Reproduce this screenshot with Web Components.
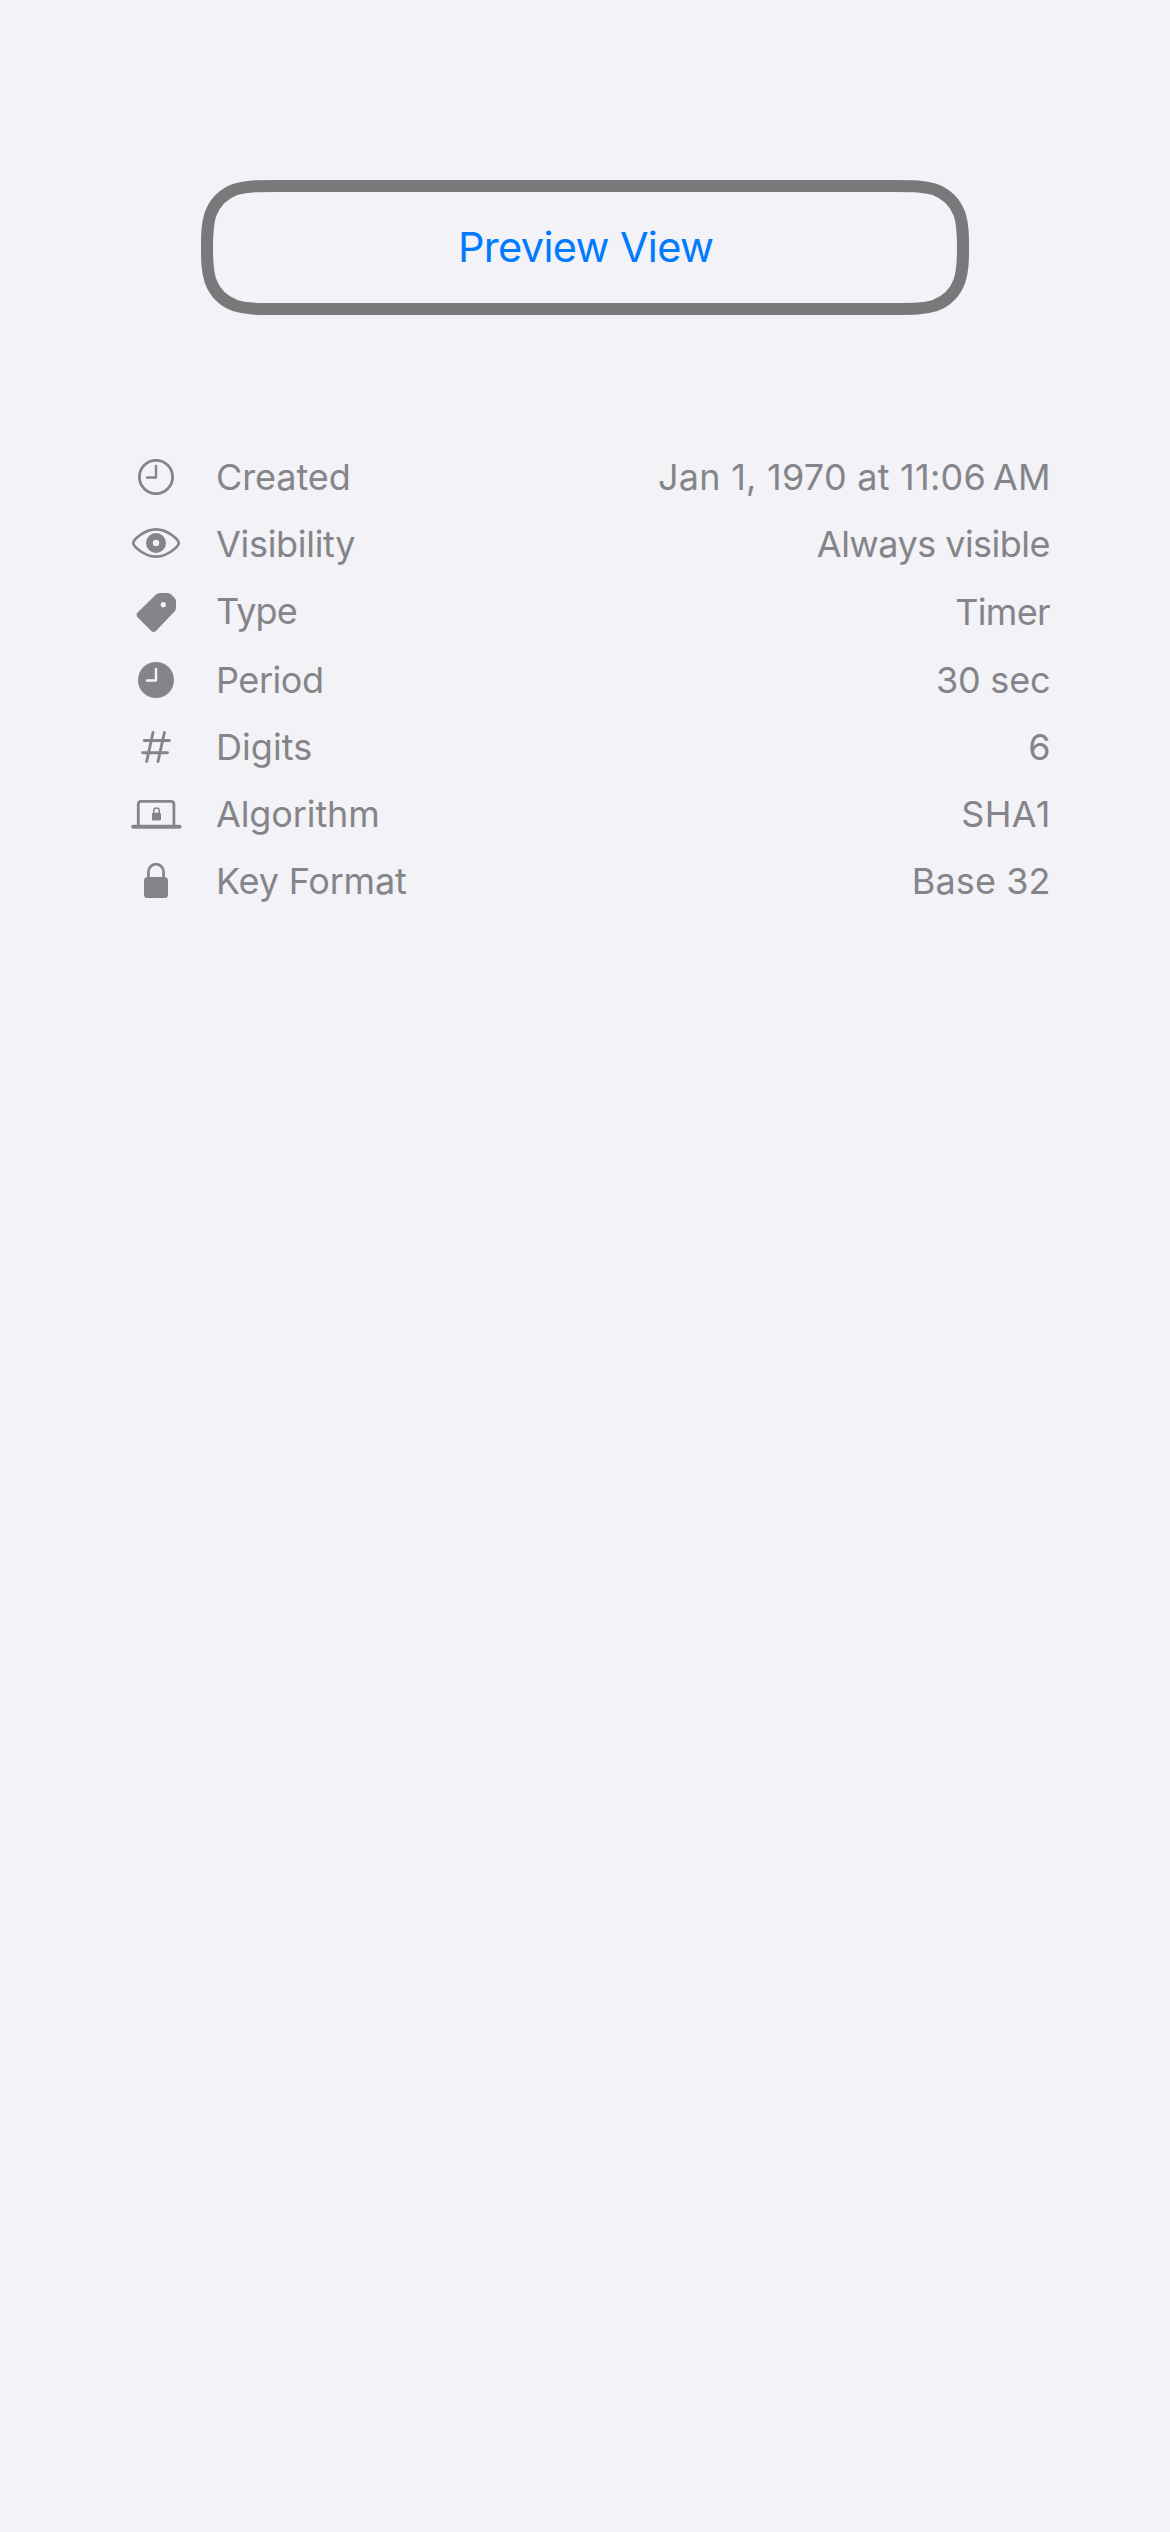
<!DOCTYPE html>
<html lang="en">
<head>
<meta charset="utf-8">
<title>Preview View</title>
<style>
html,body{margin:0;background:#f2f2f7}
body{min-height:2532px;font-family:Inter,"Liberation Sans",sans-serif}
</style>
</head>
<body>
<preview-screen></preview-screen>
<script>
const ICONS = {
  clock: '<circle cx="30" cy="33" r="16.6" stroke-width="2.8"/><path d="M30 22V33.5H21" stroke-width="2.4"/>',
  eye: '<path d="M7.2 32C7.2 29.5 17.2 18.4 30 18.4S52.8 29.5 52.8 32S42.8 45.6 30 45.6S7.2 34.5 7.2 32Z" stroke-width="2.7"/><circle cx="30" cy="32" r="6.6" stroke-width="6.8"/>',
  tag: '<path fill="currentColor" stroke="none" fill-rule="evenodd" d="M34.3 15H41.5Q43.7 15 45.2 16.500L48.5 19.8Q50 21.3 50 23.5V29.8Q50 32 48.5 33.5L30.2 52.8Q27.6 55.2 25 52.8L11.7 39.4Q9.3 36.9 11.8 34.3L29.8 16.700Q31.7 15 34.3 15ZM37.3 24.1A2.6 2.6 0 1 0 37.3 29.3A2.6 2.6 0 1 0 37.3 24.1Z"/>',
  period: '<circle cx="30" cy="33" r="18" fill="currentColor" stroke="none"/><path d="M30 22V33.5H21" stroke="#f2f2f7" stroke-width="2.4"/>',
  hash: '<path d="M27 18.5L20.7 47.5M38.4 18.5L32 47.5M18.2 26.5H43.4M16.7 38.8H41.5" stroke-width="2.9"/>',
  laptop: '<path d="M12.3 44V23.3Q12.3 20.4 15.2 20.4H45Q47.900 20.4 47.9 23.3V44" stroke-width="2.8"/><path d="M7.2 45.8H53.6" stroke-width="4"/><rect x="26" y="31.7" width="9" height="7.8" rx="1.3" fill="currentColor" stroke="none"/><path d="M27.8 32.5V29.7A2.7 2.7 0 0 1 33.2 29.7V32.5" stroke-width="1.5"/>',
  lock: '<rect x="18" y="29" width="24" height="21" rx="3.6" fill="currentColor" stroke="none"/><path d="M22.4 30V23.8A7.6 7.6 0 0 1 37.6 23.8V30" stroke-width="2.7"/>'
};

const ruler = document.createElement('canvas').getContext('2d');

// Outline of a rounded box whose corners ease continuously into the sides.
function smoothBox(x, y, w, h, r) {
  const ex = Math.min(1.52866 * r, w / 2), ey = Math.min(1.52866 * r, h / 2);
  const a = 1.08849 * r, b = .86841 * r, c = .63149 * r, d = .07491 * r, e = .37282 * r, f = .16906 * r;
  const R = x + w, B = y + h;
  return `M${x + ex} ${y}H${R - ex}
    C${R - a} ${y} ${R - b} ${y} ${R - c} ${y + d}C${R - e} ${y + f} ${R - f} ${y + e} ${R - d} ${y + c}C${R} ${y + b} ${R} ${y + a} ${R} ${y + ey}
    V${B - ey}C${R} ${B - a} ${R} ${B - b} ${R - d} ${B - c}C${R - f} ${B - e} ${R - e} ${B - f} ${R - c} ${B - d}C${R - b} ${B} ${R - a} ${B} ${R - ex} ${B}
    H${x + ex}C${x + a} ${B} ${x + b} ${B} ${x + c} ${B - d}C${x + e} ${B - f} ${x + f} ${B - e} ${x + d} ${B - c}C${x} ${B - b} ${x} ${B - a} ${x} ${B - ey}
    V${y + ey}C${x} ${y + a} ${x} ${y + b} ${x + d} ${y + c}C${x + f} ${y + e} ${x + e} ${y + f} ${x + c} ${y + d}C${x + b} ${y} ${x + a} ${y} ${x + ex} ${y}Z`;
}

// Text tracked so that its visible glyphs span the given width.
customElements.define('tracked-text', class extends HTMLElement {
  connectedCallback() {
    this.attachShadow({mode: 'open'}).innerHTML = `<style>
      :host{display:block;white-space:nowrap}
    </style><slot></slot>`;
    const text = this.textContent;
    const style = getComputedStyle(this);
    ruler.font = `${style.fontSize} ${style.fontFamily}`;
    const m = ruler.measureText(text);
    const ink = m.actualBoundingBoxRight + m.actualBoundingBoxLeft;
    if (text.length > 1) {
      const tracking = (Number(this.getAttribute('span')) - ink) / (text.length - 1);
      this.style.letterSpacing = tracking + 'px';
      this.style.marginRight = -tracking + 'px';
    }
  }
});

customElements.define('glyph-icon', class extends HTMLElement {
  connectedCallback() {
    this.attachShadow({mode: 'open'}).innerHTML = `<style>
      :host{display:block;width:60px;height:67px}
      svg{display:block}
    </style><svg width="60" height="67" viewBox="0 0 60 67" fill="none" stroke="currentColor" stroke-linecap="round" stroke-linejoin="round">${ICONS[this.getAttribute('name')]}</svg>`;
  }
});

customElements.define('preview-button', class extends HTMLElement {
  connectedCallback() {
    this.attachShadow({mode: 'open'}).innerHTML = `<style>
      :host{display:grid;width:768px;height:135px;color:#007aff;font-size:41.5px;line-height:50px}
      svg,tracked-text{grid-area:1/1}
      svg{display:block}
      tracked-text{place-self:center;padding:0 0 1px 2px}
    </style><svg width="768" height="135" viewBox="0 0 768 135" fill="none"><path stroke="#79797b" stroke-width="12" d="${smoothBox(6, 6, 756, 123, 45)}"/></svg><tracked-text span="252">${this.getAttribute('label')}</tracked-text>`;
  }
});

customElements.define('detail-row', class extends HTMLElement {
  connectedCallback() {
    const [labelSpan, valueSpan] = this.getAttribute('spans').split(' ');
    this.attachShadow({mode: 'open'}).innerHTML = `<style>
      :host{display:flex;height:67px;color:#858589;font-size:36px;line-height:66px}
      .label{margin-left:30px;flex:1}
      .value{padding-top:var(--value-drop,0px)}
    </style><glyph-icon name="${this.getAttribute('icon')}"></glyph-icon>
    <div class="label"><tracked-text span="${labelSpan}">${this.getAttribute('label')}</tracked-text></div>
    <div class="value"><tracked-text span="${valueSpan}">${this.getAttribute('value')}</tracked-text></div>`;
  }
});

customElements.define('preview-screen', class extends HTMLElement {
  connectedCallback() {
    this.attachShadow({mode: 'open'}).innerHTML = `<style>
      :host{display:flex;flex-direction:column;align-items:center;box-sizing:border-box;width:1170px;height:2532px;padding-top:180px}
      .details{display:flex;flex-direction:column;align-self:stretch;margin:129px 119.5px 0 126px}
      .tall{height:69px;--value-drop:1px}
    </style>
    <preview-button label="Preview View"></preview-button>
    <div class="details">
      <detail-row icon="clock" label="Created" value="Jan 1, 1970 at 11:06&#8239;AM" spans="130.7 389"></detail-row>
      <detail-row icon="eye" label="Visibility" value="Always visible" spans="139.3 232.7"></detail-row>
      <detail-row class="tall" icon="tag" label="Type" value="Timer" spans="79.7 93.7"></detail-row>
      <detail-row icon="period" label="Period" value="30 sec" spans="103 111"></detail-row>
      <detail-row icon="hash" label="Digits" value="6" spans="92.3 19"></detail-row>
      <detail-row icon="laptop" label="Algorithm" value="SHA1" spans="161.3 84.7"></detail-row>
      <detail-row icon="lock" label="Key Format" value="Base 32" spans="188 133.7"></detail-row>
    </div>`;
  }
});
</script>
</body>
</html>
